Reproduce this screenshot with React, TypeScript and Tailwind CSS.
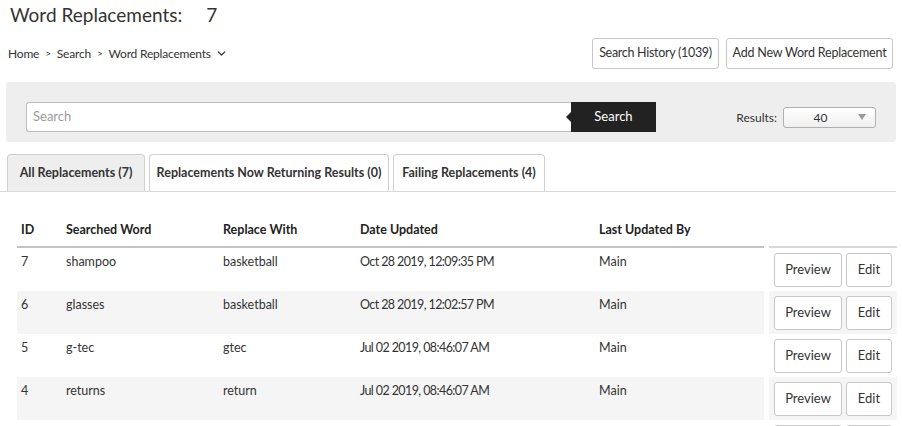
import { ChevronDown } from "lucide-react";

type Row = {
  id: number;
  word: string;
  replace: string;
  date: string;
  by: string;
};

const rows: Row[] = [
  { id: 7, word: "shampoo", replace: "basketball", date: "Oct 28 2019, 12:09:35 PM", by: "Main" },
  { id: 6, word: "glasses", replace: "basketball", date: "Oct 28 2019, 12:02:57 PM", by: "Main" },
  { id: 5, word: "g-tec", replace: "gtec", date: "Jul 02 2019, 08:46:07 AM", by: "Main" },
  { id: 4, word: "returns", replace: "return", date: "Jul 02 2019, 08:46:07 AM", by: "Main" },
];

const cols = "grid grid-cols-[45px_157px_137px_239px_169px]";

export default function App() {
  return (
    <div className="w-[902px] h-[426px] overflow-hidden bg-white text-[#333] font-['Lato',sans-serif]">
      {/* title */}
      <div className="flex pl-[10px] pt-[2px] h-[28px] text-[19px] leading-[26px] text-[#333]">
        <span>Word Replacements:</span>
        <span className="ml-[24px]">7</span>
      </div>

      {/* breadcrumb + actions */}
      <div className="flex items-center justify-between pl-[8px] pr-[9px] mt-[10px]">
        <div className="flex items-center text-[12px] tracking-[-0.2px] text-[#333]">
          <span>Home</span>
          <span className="mx-[6px] text-[10px]">&gt;</span>
          <span>Search</span>
          <span className="mx-[6px] text-[10px]">&gt;</span>
          <span>Word Replacements</span>
          <ChevronDown className="ml-[4px] w-[13px] h-[13px]" strokeWidth={2.5} />
        </div>
        <div className="flex gap-[7px]">
          <button className="h-[31px] w-[127px] whitespace-nowrap border border-[#c8c8c8] rounded-[3px] bg-white text-[12.5px] tracking-[-0.3px] text-[#333]">
            Search History (1039)
          </button>
          <button className="h-[31px] w-[167px] whitespace-nowrap border border-[#c8c8c8] rounded-[3px] bg-white text-[12.5px] tracking-[-0.2px] text-[#333]">
            Add New Word Replacement
          </button>
        </div>
      </div>

      {/* search panel */}
      <div className="mx-[6px] mt-[13px] h-[60px] bg-[#eeeeee] rounded-[3px] flex items-start justify-between px-[20px] pt-[20px]">
        <div className="flex h-[30px]">
          <div className="w-[545px] h-full border border-[#bdbdbd] border-r-0 rounded-l-[3px] bg-white flex items-center pl-[6px] text-[13px] text-[#9a9a9a]">
            Search
          </div>
          <div className="relative w-[85px] h-full bg-[#222] text-white text-[13px] flex items-center justify-center">
            <span className="absolute left-[-5px] top-[10px] w-0 h-0 border-y-[5px] border-y-transparent border-r-[5px] border-r-[#222]" />
            Search
          </div>
        </div>
        <div className="flex items-center mt-[5px]">
          <span className="text-[12px] text-[#333] mr-[6px]">Results:</span>
          <div className="relative w-[93px] h-[21px] border border-[#b0b0b0] rounded-[3px] bg-gradient-to-b from-white to-[#f0f0f0] flex items-center justify-center text-[12px] text-[#333]">
            <span className="mr-[18px]">40</span>
            <span className="absolute right-[9px] top-[6px] w-0 h-0 border-x-[4px] border-x-transparent border-t-[6px] border-t-[#999]" />
          </div>
        </div>
      </div>

      {/* tabs */}
      <div className="mt-[12px] flex items-end gap-[4px] pl-[7px] border-b border-[#d9d9d9] w-[896px]">
        <div className="w-[138px] h-[37px] rounded-t-[4px] border border-b-0 border-[#d0d0d0] bg-[#eeeeee] flex items-center justify-center text-[12.5px] font-bold text-[#333]">
          All Replacements (7)
        </div>
        <div className="w-[240px] h-[37px] rounded-t-[4px] border border-b-0 border-[#d0d0d0] bg-white flex items-center justify-center text-[12.5px] font-bold text-[#333]">
          Replacements Now Returning Results (0)
        </div>
        <div className="w-[152px] h-[37px] rounded-t-[4px] border border-b-0 border-[#d0d0d0] bg-white flex items-center justify-center text-[12.5px] font-bold text-[#333]">
          Failing Replacements (4)
        </div>
      </div>

      {/* table */}
      <div className="mt-[21px] pl-[17px]">
        <div className="flex gap-[5px]">
          <div className={`${cols} w-[747px] h-[35px] pt-[2px] items-center border-b-2 border-[#c4c4c4] text-[12.5px] font-bold text-[#222]`}>
            <span className="pl-[4px]">ID</span>
            <span className="pl-[4px]">Searched Word</span>
            <span className="pl-[4px]">Replace With</span>
            <span className="pl-[4px]">Date Updated</span>
            <span className="pl-[4px]">Last Updated By</span>
          </div>
          <div className="w-[128px] h-[35px] border-b-2 border-[#d8d8d8]" />
        </div>
        {rows.map((row, i) => {
          const bg = i % 2 === 1 ? "bg-[#f5f5f5]" : "bg-white";
          return (
            <div key={`row-${row.id}`} className="flex gap-[5px]">
              <div className={`${cols} ${bg} w-[747px] h-[43px] pt-[5px] text-[12.5px] text-[#333]`}>
                <span className="pl-[4px]">{row.id}</span>
                <span className="pl-[4px]">{row.word}</span>
                <span className="pl-[4px]">{row.replace}</span>
                <span className="pl-[4px] tracking-[-0.6px]">{row.date}</span>
                <span className="pl-[4px]">{row.by}</span>
              </div>
              <div className={`${bg} w-[128px] h-[43px] flex gap-[4px] pl-[5px] pt-[5px]`}>
                <button className="w-[68px] h-[34px] border border-[#c8c8c8] rounded-[3px] bg-white text-[13px] text-[#333]">
                  Preview
                </button>
                <button className="w-[46px] h-[34px] border border-[#c8c8c8] rounded-[3px] bg-white text-[13px] text-[#333]">
                  Edit
                </button>
              </div>
            </div>
          );
        })}
        {/* next row, only its button edges show */}
        <div className="flex gap-[5px]">
          <div className="w-[747px] h-[43px] bg-white" />
          <div className="w-[128px] h-[43px] flex gap-[4px] pl-[5px] pt-[5px]">
            <div className="w-[68px] h-[34px] border border-[#c8c8c8] rounded-[3px] bg-white" />
            <div className="w-[46px] h-[34px] border border-[#c8c8c8] rounded-[3px] bg-white" />
          </div>
        </div>
      </div>
    </div>
  );
}
